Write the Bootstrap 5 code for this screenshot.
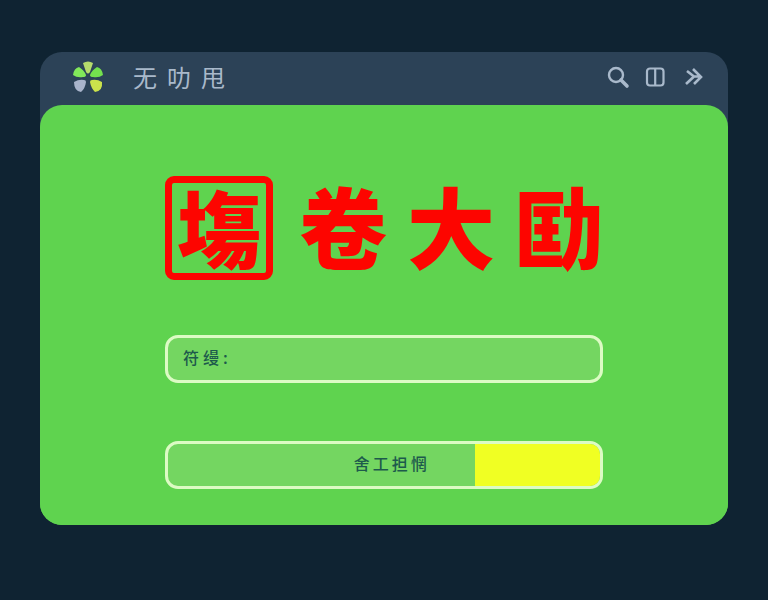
<!DOCTYPE html>
<html lang="zh">
<head>
<meta charset="utf-8">
<meta name="viewport" content="width=device-width, initial-scale=1">
<title>无叻甩</title>
<link href="https://cdn.jsdelivr.net/npm/bootstrap@5.3.0/dist/css/bootstrap.min.css" rel="stylesheet">
<style>
body { background: #0f2332; font-family: "Noto Sans CJK SC", "Noto Sans", sans-serif; }
.page { padding: 52px 40px; }
.window { border-radius: 22px; background: linear-gradient(#2c4257 50%, #5fd34f 50%); }
.topbar { height: 53px; padding: 0 21px 4px 32px; }
.brand { gap: 29px; color: #a9b9cb; }
.brand-name { gap: 10px; font-size: 24px; line-height: 32px; }
.tools { gap: 12px; }
.tool { width: 26px; height: 26px; color: #a9b9cb; }
.panel { border-radius: 22px; background: #5fd34f; padding: 71px 24px 36px; }
.content { max-width: 438px; }
.headline { color: #fd0500; font-size: 88px; font-weight: 900; }
.seal { width: 108px; height: 104px; padding-bottom: 4px; border: 7px solid #fd0500; border-radius: 9px; font-size: 84px; line-height: 88px; }
.words { gap: 20px; line-height: 88px; padding-bottom: 8px; }
.field { height: 48px; border: 3px solid #dcfbc4; border-radius: 13px; background: #74d661; color: #1d5a4c; font-size: 16px; font-weight: 500; line-height: 24px; }
.field-name { padding: 0 0 4px 15px; gap: 4px; }
.field-input, .field-input:focus { background: transparent; color: #1d5a4c; box-shadow: none; }
.first-row { margin-top: 55px; }
.second-row { margin-top: 58px; }
.action-name { gap: 3px; padding-bottom: 4px; }
.action-end { width: 29%; background: #f0ff23; }
</style>
<script src="https://cdn.jsdelivr.net/npm/bootstrap@5.3.0/dist/js/bootstrap.bundle.min.js"></script>
</head>
<body>
<main class="page">
<div class="window">
<header class="topbar d-flex align-items-center justify-content-between">
<a href="#" class="brand d-flex align-items-center text-decoration-none">
<svg width="32" height="34" viewBox="0 0 32 34" aria-hidden="true">
<path d="M11 3Q16 0 21 3L18 12Q16 15 14 12Z" fill="#b6dc6c"/>
<path d="M1 15Q2 8 7 7Q12 10 14 15Q14 17 11 17Q5 18 1 15Z" fill="#82e85a"/>
<path d="M25 7Q30 8 31 15Q27 18 21 17Q18 17 18 15Q20 10 25 7Z" fill="#74e04e"/>
<path d="M2 22Q7 19 12 20Q14 20 14 22Q13 29 9 32Q2 31 2 22Z" fill="#a9b4cb"/>
<path d="M18 22Q18 20 20 20Q25 19 30 22Q31 31 23 32Q19 28 18 22Z" fill="#cbe24c"/>
</svg>
<span class="brand-name d-flex"><span>无</span><span>叻</span><span>甩</span></span>
</a>
<nav class="tools d-flex align-items-center">
<button type="button" class="tool btn p-0 border-0 d-flex" aria-label="搜索"><svg width="26" height="26" viewBox="0 0 26 26" fill="none" stroke="currentColor" stroke-width="2.4"><circle cx="11" cy="11" r="7"/><path d="M16 16L22 22" stroke-width="3.6" stroke-linecap="round"/></svg></button>
<button type="button" class="tool btn p-0 border-0 d-flex" aria-label="分栏"><svg width="26" height="26" viewBox="0 0 26 26" fill="none" stroke="currentColor" stroke-width="2.2"><rect x="4" y="4.5" width="16.5" height="17" rx="3"/><path d="M12.2 5V21"/></svg></button>
<button type="button" class="tool btn p-0 border-0 d-flex" aria-label="更多"><svg width="26" height="26" viewBox="0 0 26 26" fill="none" stroke="currentColor" stroke-width="2.6"><path d="M6 7L13 12.500L5 20M12 5L20 13L13 20M13 12.500H18"/></svg></button>
</nav>
</header>
<section class="panel">
<form class="content mx-auto">
<h1 class="headline d-flex align-items-center justify-content-between m-0">
<span class="seal d-flex align-items-center justify-content-center">塲</span>
<span class="words d-flex"><span>卷</span><span>大</span><span>劻</span></span>
</h1>
<div class="field first-row d-flex align-items-center">
<label for="secret" class="field-name d-flex flex-shrink-0"><span>符</span><span>缦</span><span>:</span></label>
<input id="secret" type="text" class="field-input form-control border-0">
</div>
<button type="button" class="field second-row d-flex w-100 p-0 overflow-hidden align-items-stretch">
<span class="action-name d-flex flex-fill align-self-center justify-content-end pe-5"><span>舍</span><span>工</span><span>担</span><span>惘</span></span>
<span class="action-end"></span>
</button>
</form>
</section>
</div>
</main>
</body>
</html>
